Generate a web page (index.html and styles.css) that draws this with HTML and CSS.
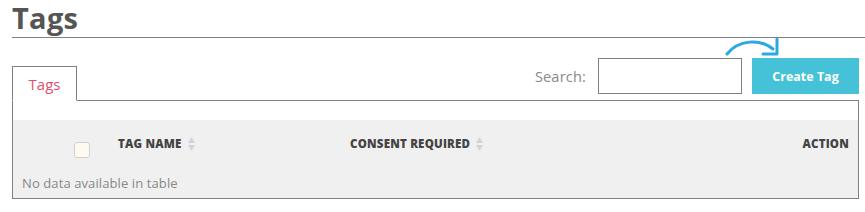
FILE: index.html
```html
<!DOCTYPE html>
<html>
<head>
<meta charset="utf-8">
<link rel="stylesheet" href="styles.css">
</head>
<body>
<div class="page">
  <h1 class="title">Tags</h1>
  <div class="rule"></div>
  <div class="tabbar">
    <div class="tab">Tags</div>
    <div class="tools">
      <label class="search-label">Search:</label>
      <input class="search-input" type="text">
      <div class="btn-wrap">
        <svg class="hint-arrow" width="60" height="24" viewBox="0 0 60 24">
          <path d="M3 18 C 14 4, 36 2, 49 13" fill="none" stroke="#2ba9e1" stroke-width="3" stroke-linecap="round"/>
          <path d="M53 3 L53 18 L39 18" fill="none" stroke="#2ba9e1" stroke-width="3" stroke-linecap="round" stroke-linejoin="round"/>
        </svg>
        <button class="btn-create">Create Tag</button>
      </div>
    </div>
  </div>
  <div class="panel">
    <div class="table">
      <div class="thead">
        <div class="th th-check"><span class="checkbox"></span></div>
        <div class="th">TAG NAME <svg class="sort" width="7" height="16" viewBox="0 0 7 16"><path d="M3.5 1 L7 7 L0 7 Z" fill="#d4d4d4"/><path d="M0 9 L7 9 L3.5 15 Z" fill="#d4d4d4"/></svg></div>
        <div class="th">CONSENT REQUIRED <svg class="sort" width="7" height="16" viewBox="0 0 7 16"><path d="M3.5 1 L7 7 L0 7 Z" fill="#d4d4d4"/><path d="M0 9 L7 9 L3.5 15 Z" fill="#d4d4d4"/></svg></div>
        <div class="th th-action">ACTION</div>
      </div>
      <div class="empty">No data available in table</div>
    </div>
  </div>
</div>
</body>
</html>
```

FILE: styles.css
```css
html, body {
  margin: 0;
  padding: 0;
  background: #fff;
}
body {
  font-family: "Open Sans", "Noto Sans", sans-serif;
}
.page {
  padding: 0 6px 0 12px;
}
.title {
  margin: 0;
  font-size: 29px;
  line-height: 36px;
  font-weight: 700;
  color: #555;
  letter-spacing: 0.3px;
}
.rule {
  height: 1px;
  background: #808080;
  margin: 1px -6px 0 0;
}
.tabbar {
  display: flex;
  align-items: flex-end;
  justify-content: space-between;
  border-bottom: 1px solid #808080;
  margin-top: 20px;
}
.tab {
  width: 63px;
  height: 33px;
  border: 1px solid #808080;
  border-bottom-color: #fff;
  margin-bottom: -1px;
  color: #e2506c;
  font-size: 15px;
  line-height: 35px;
  text-align: center;
}
.tools {
  display: flex;
  align-items: center;
  margin-bottom: 6px;
}
.search-label {
  color: #888;
  font-size: 14.5px;
  letter-spacing: 0.2px;
  margin-right: 12px;
}
.search-input {
  width: 144px;
  box-sizing: border-box;
  height: 36px;
  border: 1px solid #808080;
  padding: 0 6px;
  margin: 0 10px 0 0;
  outline: none;
}
.btn-wrap {
  position: relative;
}
.hint-arrow {
  position: absolute;
  left: -28px;
  top: -22px;
}
.btn-create {
  display: block;
  width: 107px;
  height: 36px;
  border: 0;
  background: #45c1d8;
  color: #fff;
  font-family: "Open Sans", "Noto Sans", sans-serif;
  font-weight: 700;
  font-size: 12.5px;
  padding: 0;
}
.panel {
  border: 1px solid #808080;
  border-top: 0;
  padding-top: 19px;
}
.table {
  background: #f0f0f0;
}
.thead {
  display: grid;
  grid-template-columns: 105px 232px 1fr auto;
  height: 49px;
  padding-top: 16px;
  box-sizing: border-box;
}
.th {
  font-size: 11.5px;
  font-weight: 800;
  color: #444;
  line-height: 16px;
  letter-spacing: 0.2px;
  display: flex;
  align-items: flex-start;
  gap: 6px;
  white-space: nowrap;
}
.th-check {
  padding-left: 61px;
}
.checkbox {
  display: block;
  width: 14px;
  height: 14px;
  margin-top: 6px;
  border: 1px solid #cfcfcf;
  border-radius: 3px;
  background: #fffaf0;
}
.th-action {
  padding-right: 9px;
}
.sort {
  display: block;
}
.empty {
  height: 29px;
  line-height: 29px;
  padding-left: 9px;
  font-size: 13px;
  letter-spacing: 0.1px;
  color: #888;
}
```
